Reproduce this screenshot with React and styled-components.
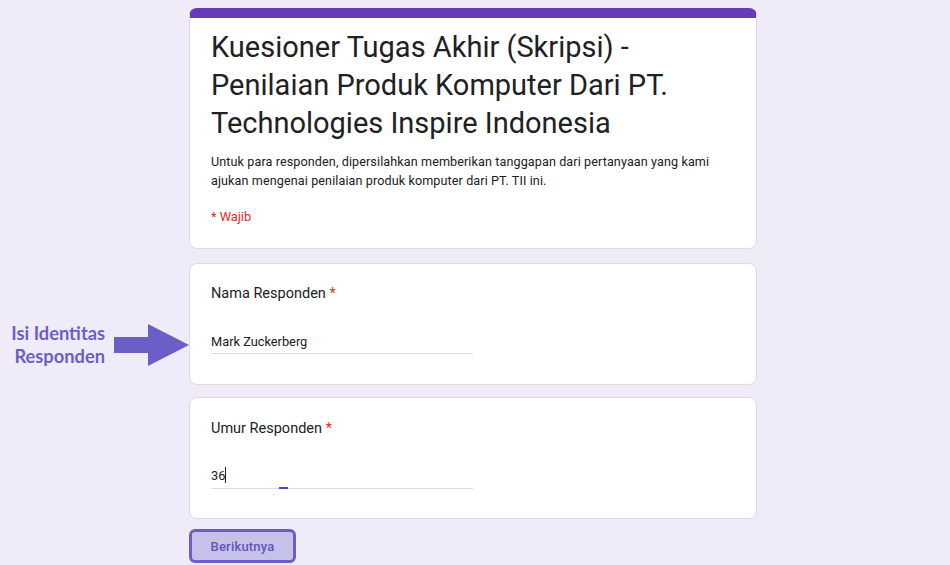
import styled, { createGlobalStyle } from "styled-components";

const GlobalStyle = createGlobalStyle`
	html, body {
		margin: 0;
		padding: 0;
		background: #efebf8;
	}
	body {
		font-family: Roboto, "Liberation Sans", Arial, sans-serif;
		color: #202124;
	}
`;

const Page = styled.div`
	width: 950px;
	height: 565px;
	overflow: hidden;
	display: grid;
	grid-template-columns: 189px 568px;
	grid-auto-rows: auto;
	row-gap: 12px;
	padding-top: 8px;
	box-sizing: border-box;
`;

const Side = styled.div`
	display: flex;
	align-items: center;
	justify-content: flex-start;
	align-self: start;
	padding: 59px 0 0 0;
`;

const Note = styled.div`
	font-family: Lato, "Open Sans", sans-serif;
	font-weight: 700;
	font-size: 18.3px;
	line-height: 23px;
	color: #6b5fc7;
	text-align: right;
	width: 105px;
`;

const Arrow = styled.svg`
	display: block;
	margin-left: 9px;
`;

const Card = styled.div`
	grid-column: 2;
	background: #fff;
	border: 1px solid #dadce0;
	border-radius: 8px;
	box-sizing: border-box;
	padding: 17px 21px 28px;
	position: relative;
	overflow: hidden;
`;

const HeadCard = styled(Card)`
	border-top: 10px solid #673ab7;
	padding: 10px 21px 20px;
	height: 241px;
`;

const Title = styled.h1`
	margin: 0;
	font-family: Roboto, "Open Sans", sans-serif;
	font-weight: 400;
	font-size: 29px;
	line-height: 38px;
	color: #202124;
`;

const Desc = styled.p`
	margin: 10px 0 0;
	font-size: 12.6px;
	line-height: 19px;
	color: #202124;
	letter-spacing: 0.1px;
`;

const Required = styled.div`
	margin-top: 17px;
	font-size: 12.8px;
	line-height: 20px;
	color: #d93025;
`;

const Label = styled.div`
	font-size: 14.5px;
	line-height: 24px;
	color: #202124;
	padding-top: ${(p) => p.$top || "0"};

	span {
		color: #d93025;
	}
`;

const Field = styled.div`
	position: relative;
	width: 50%;
	height: 20px;
	margin-top: ${(p) => p.$gap || "26px"};
	padding-bottom: ${(p) => p.$below || "1px"};
	border-bottom: 1px solid #dadce0;
	font-size: 12.8px;
	line-height: 20px;
	color: #202124;
`;

const Caret = styled.span`
	display: inline-block;
	width: 1px;
	height: 16px;
	background: #202124;
	vertical-align: -3px;
`;

const Focus = styled.div`
	position: absolute;
	left: 68px;
	bottom: -1px;
	width: 9px;
	height: 2px;
	background: #673ab7;
`;

const Footer = styled.div`
	grid-column: 2;
`;

const Button = styled.div`
	display: inline-flex;
	align-items: center;
	justify-content: center;
	width: 107px;
	height: 34px;
	box-sizing: border-box;
	border: 3px solid #6b5fc7;
	border-radius: 6px;
	background: #c6c1e9;
	color: #5f55b8;
	font-size: 13px;
	font-weight: 500;
	letter-spacing: 0.2px;
	margin-top: -2px;
`;

export default function App() {
	return (
		<>
			<GlobalStyle />
			<Page>
				<HeadCard>
					<Title>
						Kuesioner Tugas Akhir (Skripsi) - Penilaian Produk Komputer Dari PT.
						Technologies Inspire Indonesia
					</Title>
					<Desc>
						Untuk para responden, dipersilahkan memberikan tanggapan dari pertanyaan yang
						kami ajukan mengenai penilaian produk komputer dari PT. TII ini.
					</Desc>
					<Required>* Wajib</Required>
				</HeadCard>

				<Side>
					<Note>
						Isi Identitas
						<br />
						Responden
					</Note>
					<Arrow width="75" height="42" viewBox="0 0 75 42">
						<path d="M0 13 H34 V0 L75 21 L34 42 V29 H0 Z" fill="#6b5fc7" />
					</Arrow>
				</Side>
				<Card>
					<Label $top="1px">
						Nama Responden <span>*</span>
					</Label>
					<Field>Mark Zuckerberg</Field>
				</Card>

				<Card>
					<Label $top="2px">
						Umur Responden <span>*</span>
					</Label>
					<Field $gap="25px" $below="2px">
						36
						<Caret />
						<Focus />
					</Field>
				</Card>

				<Footer>
					<Button>Berikutnya</Button>
				</Footer>
			</Page>
		</>
	);
}
